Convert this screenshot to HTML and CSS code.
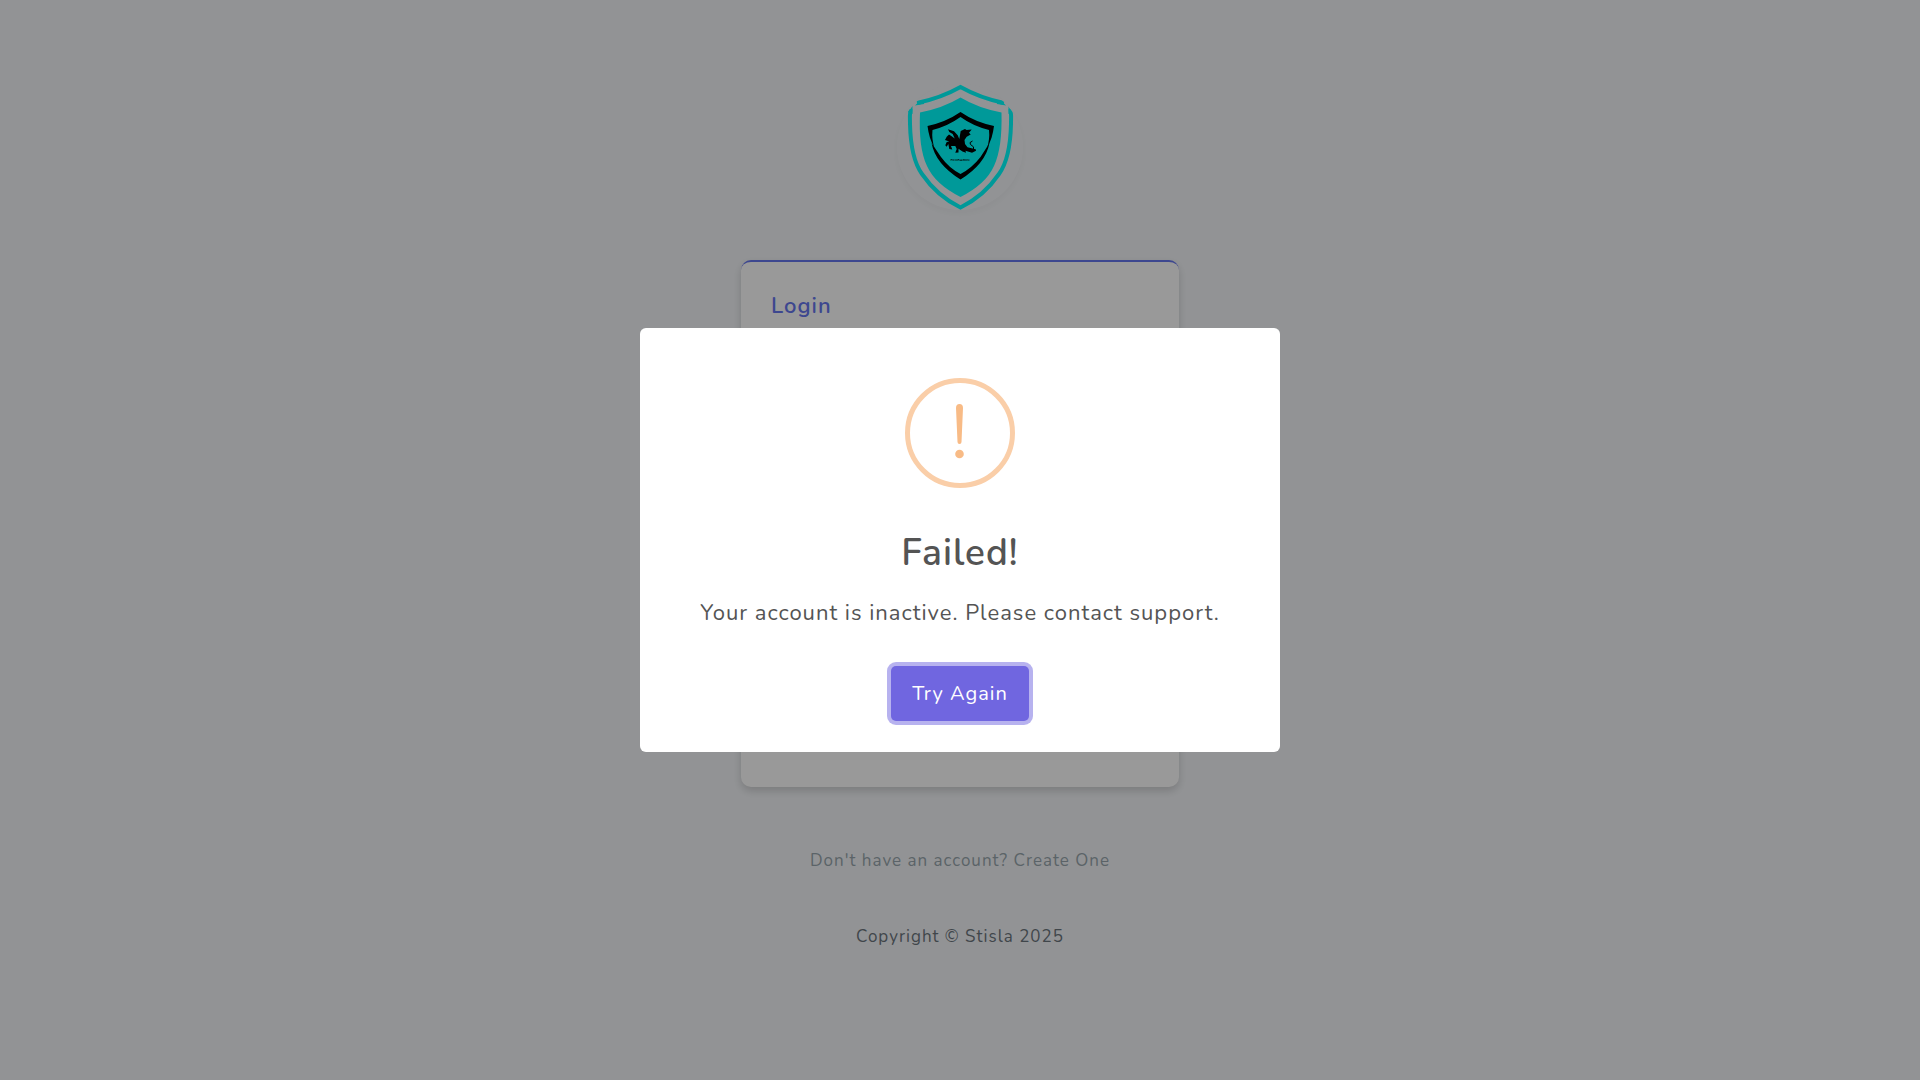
FILE: index.html
```html
<!DOCTYPE html>
<html lang="en">
<head>
<meta charset="utf-8">
<meta name="viewport" content="width=device-width, initial-scale=1">
<title>Login</title>
<link rel="stylesheet" href="styles.css">
</head>
<body>
<main class="page">
  <svg class="brand" viewBox="0 0 126 126" role="img" aria-label="Hidragon">
    <g fill="none" stroke="#00ffff" stroke-width="4">
      <path d="M20 19Q44 14 63.500 3Q83 14 107 19"/>
      <path d="M13.500 25Q12.500 32 13 40C13.500 62 17 79 25 90Q40 112 63.500 123.500Q87 112 102 90C110 79 113.500 62 114 40Q114.500 32 113.500 25"/>
    </g>
    <path fill="#00ffff" d="M18 21.500L23 16.500L27 16L27 20ZM109 21.500L104 16.500L100 16L100 20ZM11 28L15.500 22L15.500 30ZM116 28L111.500 22L111.500 30Z"/>
    <path fill="#00ffff" d="M23 28.500Q46 24 63.500 13.500Q81 24 104.500 28.500C105 52 103 69 97 82Q89 100 63.500 113Q38 100 30 82C24 69 22 52 23 28.500Z"/>
    <g fill="#000">
      <path d="M30.500 42Q49 38 63.500 28Q78 38 97 42C96 50 94 57 90 64Q93 55 92 46Q76 42 63.500 33Q51 42 35.500 46Q34.500 55 37.500 64C33.500 57 31.500 50 30.500 42Z"/>
      <path d="M34.500 59L44 73Q52 84 63.500 90Q75 84 83.500 73L92.500 59Q88.500 80 63.500 95.500Q38.500 80 34.500 59Z"/>
      <path d="M51 45.300L57 47.300L60.700 51.300L62.300 55L63.700 47L68 45L69.500 46L74.700 45.500L72 48.700L73.700 50.500L69.700 52.700L67.500 56L68 60L70.500 63.300L78.700 65.300L79 66.700L75 68.700L68.500 66.700L69 68.700L65.500 67.500L61.500 64.700L61.500 68.500L58.300 68.700L59.700 65L58.300 62L54 62L55.300 65.500L52.300 65L51.300 60L49.700 62.700L48.300 61.300L49.700 58L52.300 57.500L48 56L49.700 52.700L52 50.500L55 52.500L57.700 54.500L55.700 50L52.300 48Z"/>
      <path fill="none" stroke="#000" stroke-width="1" d="M75.500 57Q71.500 58.500 73.500 60.500Q78 62.500 76.500 66"/>
    </g>
    <text class="brand-name" x="63" y="77" text-anchor="middle">HIDRAGON</text>
  </svg>
  <section class="card"><h1 class="card-title">Login</h1></section>
  <p class="signup">Don't have an account? <a href="#">Create One</a></p>
  <footer class="copyright">Copyright © Stisla 2025</footer>
</main>
<div class="overlay">
  <div class="modal" role="alertdialog" aria-labelledby="title" aria-describedby="message">
    <svg class="warning" viewBox="0 0 110 110" aria-hidden="true">
      <circle cx="55" cy="55" r="52.500" fill="none" stroke="#facea8" stroke-width="5"/>
      <path fill="#f8bb86" d="M51 30Q51 26 54.500 26Q58 26 58 30L56.500 64Q56.500 66 54.500 66Q52.500 66 52.500 64Z"/>
      <circle cx="54.500" cy="76" r="4.300" fill="#f8bb86"/>
    </svg>
    <h2 class="modal-title" id="title">Failed!</h2>
    <p class="modal-text" id="message">Your account is inactive. Please contact support.</p>
    <button class="confirm" type="button">Try Again</button>
  </div>
</div>
</body>
</html>
```
FILE: styles.css
```css
* { box-sizing: border-box; }
body {
  margin: 0;
  min-height: 100vh;
  background: #f4f6f9;
  color: #6c757d;
  font: 17px/28px Nunito, "Open Sans", sans-serif;
  letter-spacing: 1px;
}
.page {
  display: flex;
  flex-direction: column;
  align-items: center;
  padding: 84px 16px 40px;
}
.brand {
  width: 126px;
  height: 126px;
  border-radius: 50%;
  box-shadow: 0 3px 8px rgba(0, 0, 0, 0.04);
}
.brand-name {
  font: 4px "Liberation Mono", monospace;
  letter-spacing: normal;
  fill: #000;
}
.card {
  width: 100%;
  max-width: 438px;
  min-height: 527px;
  margin-top: 50px;
  padding: 30px;
  background: #fff;
  border-top: 2px solid #6777ef;
  border-radius: 10px;
  box-shadow: 0 4px 8px rgba(0, 0, 0, 0.16);
}
.card-title {
  margin: 0;
  color: #6777ef;
  font-size: 22px;
  line-height: 28px;
  font-weight: 600;
}
.signup { margin: 60px 0 0; color: #98a6ad; }
.signup a { color: inherit; text-decoration: none; }
.copyright { margin-top: 48px; }
.overlay {
  position: fixed;
  inset: 0;
  display: flex;
  align-items: center;
  justify-content: center;
  padding: 12px;
  background: rgba(0, 0, 0, 0.4);
}
.modal {
  display: flex;
  flex-direction: column;
  align-items: center;
  width: 100%;
  max-width: 640px;
  padding: 50px 30px 31px;
  background: #fff;
  border-radius: 6px;
  color: #545454;
  text-align: center;
}
.warning { width: 110px; height: 110px; }
.modal-title {
  margin: 41px 0 0;
  font-size: 37px;
  line-height: 48px;
  font-weight: 600;
}
.modal-text { margin: 20px 0 0; font-size: 22px; line-height: 32px; }
.confirm {
  margin-top: 37px;
  padding: 13px 21px;
  border: 0;
  border-radius: 5px;
  background: #7066e0;
  box-shadow: 0 0 0 4px rgba(112, 102, 224, 0.5);
  color: #fff;
  font: inherit;
  font-size: 20px;
  line-height: 29px;
  letter-spacing: inherit;
}
```
